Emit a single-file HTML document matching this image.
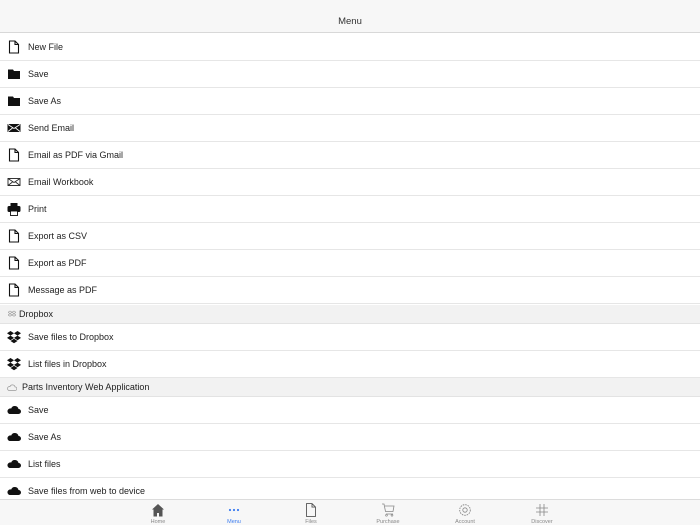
<!DOCTYPE html>
<html><head><meta charset="utf-8">
<style>
*{margin:0;padding:0;box-sizing:border-box}
body{width:700px;height:525px;overflow:hidden;background:#fff;font-family:"Liberation Sans",Arial,sans-serif;position:relative;color:#222}
.hdr{position:absolute;left:0;top:0;width:700px;height:33px;background:#f7f7f7;border-bottom:1px solid #d8d8d8;text-align:center;font-size:9.5px;line-height:44px;color:#333}
.row{position:absolute;left:0;width:700px;height:27px;border-bottom:1px solid #e6e6e6;font-size:9px;line-height:27px}
.row span{position:absolute;left:28px}
.row svg{position:absolute;left:7px;top:6px}
.sec{position:absolute;left:0;width:700px;height:19px;background:#f2f2f2;border-bottom:1px solid #e3e3e3;font-size:9px;line-height:19px}
.tab{position:absolute;left:0;top:499px;width:700px;height:26px;background:#f7f7f7;border-top:1px solid #dcdcdc}
.t{position:absolute;top:0;width:60px;text-align:center;font-size:5.5px;color:#888}
.t svg{display:block;margin:3px auto 0}
.t div{margin-top:2px}
</style></head><body>
<div class="hdr">Menu</div>

<div class="row" style="top:34px"><svg width="14" height="14"><path d="M2.5 1h5.5l3.5 3.5v8.5h-9z M8 1v3.5h3.5" fill="none" stroke="#111" stroke-width="1.1"/></svg><span>New File</span></div>
<div class="row" style="top:61px"><svg width="14" height="14"><path d="M1 2.5h5l1 1.5h6V12H1z" fill="#111"/></svg><span>Save</span></div>
<div class="row" style="top:88px"><svg width="14" height="14"><path d="M1 2.5h5l1 1.5h6V12H1z" fill="#111"/></svg><span>Save As</span></div>
<div class="row" style="top:115px"><svg width="14" height="14"><rect x="0.5" y="3" width="13" height="8" fill="#111"/><path d="M1 3.5l6 4 6-4M1 10.5l4.5-3.5M13 10.5L8.5 7" stroke="#fff" stroke-width=".9" fill="none"/></svg><span>Send Email</span></div>
<div class="row" style="top:142px"><svg width="14" height="14"><path d="M2.5 1h5.5l3.5 3.5v8.5h-9z M8 1v3.5h3.5" fill="none" stroke="#111" stroke-width="1.1"/></svg><span>Email as PDF via Gmail</span></div>
<div class="row" style="top:169px"><svg width="14" height="14"><rect x="1" y="3.5" width="12" height="7" fill="none" stroke="#222" stroke-width=".9"/><path d="M1 3.5l6 4 6-4M1 10.5l4.5-3.5M13 10.5L8.5 7" stroke="#222" stroke-width=".8" fill="none"/></svg><span>Email Workbook</span></div>
<div class="row" style="top:196px"><svg width="14" height="14"><rect x="3.5" y="1" width="7" height="3" fill="#111"/><rect x="0.5" y="4" width="13" height="6" rx="1.5" fill="#111"/><rect x="3.5" y="9" width="7" height="4.5" fill="#fff" stroke="#111" stroke-width=".9"/></svg><span>Print</span></div>
<div class="row" style="top:223px"><svg width="14" height="14"><path d="M2.5 1h5.5l3.5 3.5v8.5h-9z M8 1v3.5h3.5" fill="none" stroke="#111" stroke-width="1.1"/></svg><span>Export as CSV</span></div>
<div class="row" style="top:250px"><svg width="14" height="14"><path d="M2.5 1h5.5l3.5 3.5v8.5h-9z M8 1v3.5h3.5" fill="none" stroke="#111" stroke-width="1.1"/></svg><span>Export as PDF</span></div>
<div class="row" style="top:277px"><svg width="14" height="14"><path d="M2.5 1h5.5l3.5 3.5v8.5h-9z M8 1v3.5h3.5" fill="none" stroke="#111" stroke-width="1.1"/></svg><span>Message as PDF</span></div>

<div class="sec" style="top:305px"><svg width="8" height="8" style="position:absolute;left:8px;top:5px"><path d="M2 1l2 1.3L2 3.6 0 2.3zM6 1l2 1.3-2 1.3-2-1.3zM2 3.6L4 5 2 6.3 0 5zM6 3.6L8 5 6 6.3 4 5z" fill="none" stroke="#999" stroke-width=".6"/></svg><span style="position:absolute;left:19px">Dropbox</span></div>
<div class="row" style="top:324px"><svg width="14" height="14"><path d="M3.5 1l3.5 2.3-3.5 2.3L0 3.3zM10.5 1L14 3.3l-3.5 2.3L7 3.3zM3.5 5.6L7 7.9 3.5 10.2 0 7.9zM10.5 5.6L14 7.9l-3.5 2.3L7 7.9zM3.5 11L7 8.8l3.5 2.2L7 13.3z" fill="#111"/></svg><span>Save files to Dropbox</span></div>
<div class="row" style="top:351px"><svg width="14" height="14"><path d="M3.5 1l3.5 2.3-3.5 2.3L0 3.3zM10.5 1L14 3.3l-3.5 2.3L7 3.3zM3.5 5.6L7 7.9 3.5 10.2 0 7.9zM10.5 5.6L14 7.9l-3.5 2.3L7 7.9zM3.5 11L7 8.8l3.5 2.2L7 13.3z" fill="#111"/></svg><span>List files in Dropbox</span></div>

<div class="sec" style="top:378px"><svg width="10" height="7" style="position:absolute;left:7px;top:5.5px"><path d="M2 6.5h6a1.8 1.8 0 0 0 0-3.6A2.6 2.6 0 0 0 3 2.6 2 2 0 0 0 2 6.5z" fill="none" stroke="#999" stroke-width=".7"/></svg><span style="position:absolute;left:22px">Parts Inventory Web Application</span></div>
<div class="row" style="top:397px"><svg width="14" height="14"><path d="M2.5 11h9a2.5 2.5 0 0 0 0-5A3.8 3.8 0 0 0 4.2 5.5 2.8 2.8 0 0 0 2.5 11z" fill="#111"/></svg><span>Save</span></div>
<div class="row" style="top:424px"><svg width="14" height="14"><path d="M2.5 11h9a2.5 2.5 0 0 0 0-5A3.8 3.8 0 0 0 4.2 5.5 2.8 2.8 0 0 0 2.5 11z" fill="#111"/></svg><span>Save As</span></div>
<div class="row" style="top:451px"><svg width="14" height="14"><path d="M2.5 11h9a2.5 2.5 0 0 0 0-5A3.8 3.8 0 0 0 4.2 5.5 2.8 2.8 0 0 0 2.5 11z" fill="#111"/></svg><span>List files</span></div>
<div class="row" style="top:478px;border:none"><svg width="14" height="14"><path d="M2.5 11h9a2.5 2.5 0 0 0 0-5A3.8 3.8 0 0 0 4.2 5.5 2.8 2.8 0 0 0 2.5 11z" fill="#111"/></svg><span>Save files from web to device</span></div>

<div class="tab">
<div class="t" style="left:128px"><svg width="14" height="14"><path d="M7 1L1 6.5h1.5v7h3.5V10h2v3.5h3.5v-7H13z" fill="#555"/></svg><div>Home</div></div>
<div class="t" style="left:204px;color:#3b7cf0"><svg width="14" height="14"><circle cx="3" cy="7" r="1.1" fill="#3b7cf0"/><circle cx="7" cy="7" r="1.1" fill="#3b7cf0"/><circle cx="11" cy="7" r="1.1" fill="#3b7cf0"/></svg><div>Menu</div></div>
<div class="t" style="left:281px"><svg width="14" height="14"><path d="M2.5 .6h5.5l3.5 3.5v9.3h-9z M8 .6v3.5h3.5" fill="none" stroke="#555" stroke-width=".9"/></svg><div>Files</div></div>
<div class="t" style="left:358px"><svg width="14" height="14"><path d="M1 1h2l1.5 7.5h7.5l1-5.5H4M5 11h7" fill="none" stroke="#888" stroke-width=".8"/><circle cx="5.5" cy="12.3" r=".9" fill="none" stroke="#888" stroke-width=".7"/><circle cx="11" cy="12.3" r=".9" fill="none" stroke="#888" stroke-width=".7"/></svg><div>Purchase</div></div>
<div class="t" style="left:435px"><svg width="14" height="14"><circle cx="7" cy="7" r="5.3" fill="none" stroke="#888" stroke-width=".9" stroke-dasharray="1.6 .9"/><circle cx="7" cy="7" r="2.2" fill="none" stroke="#888" stroke-width=".8"/></svg><div>Account</div></div>
<div class="t" style="left:512px"><svg width="14" height="14"><path d="M5 1v12M9 1v12M1 5h12M1 9h12" stroke="#888" stroke-width=".8"/></svg><div>Discover</div></div>
</div>
</body></html>
